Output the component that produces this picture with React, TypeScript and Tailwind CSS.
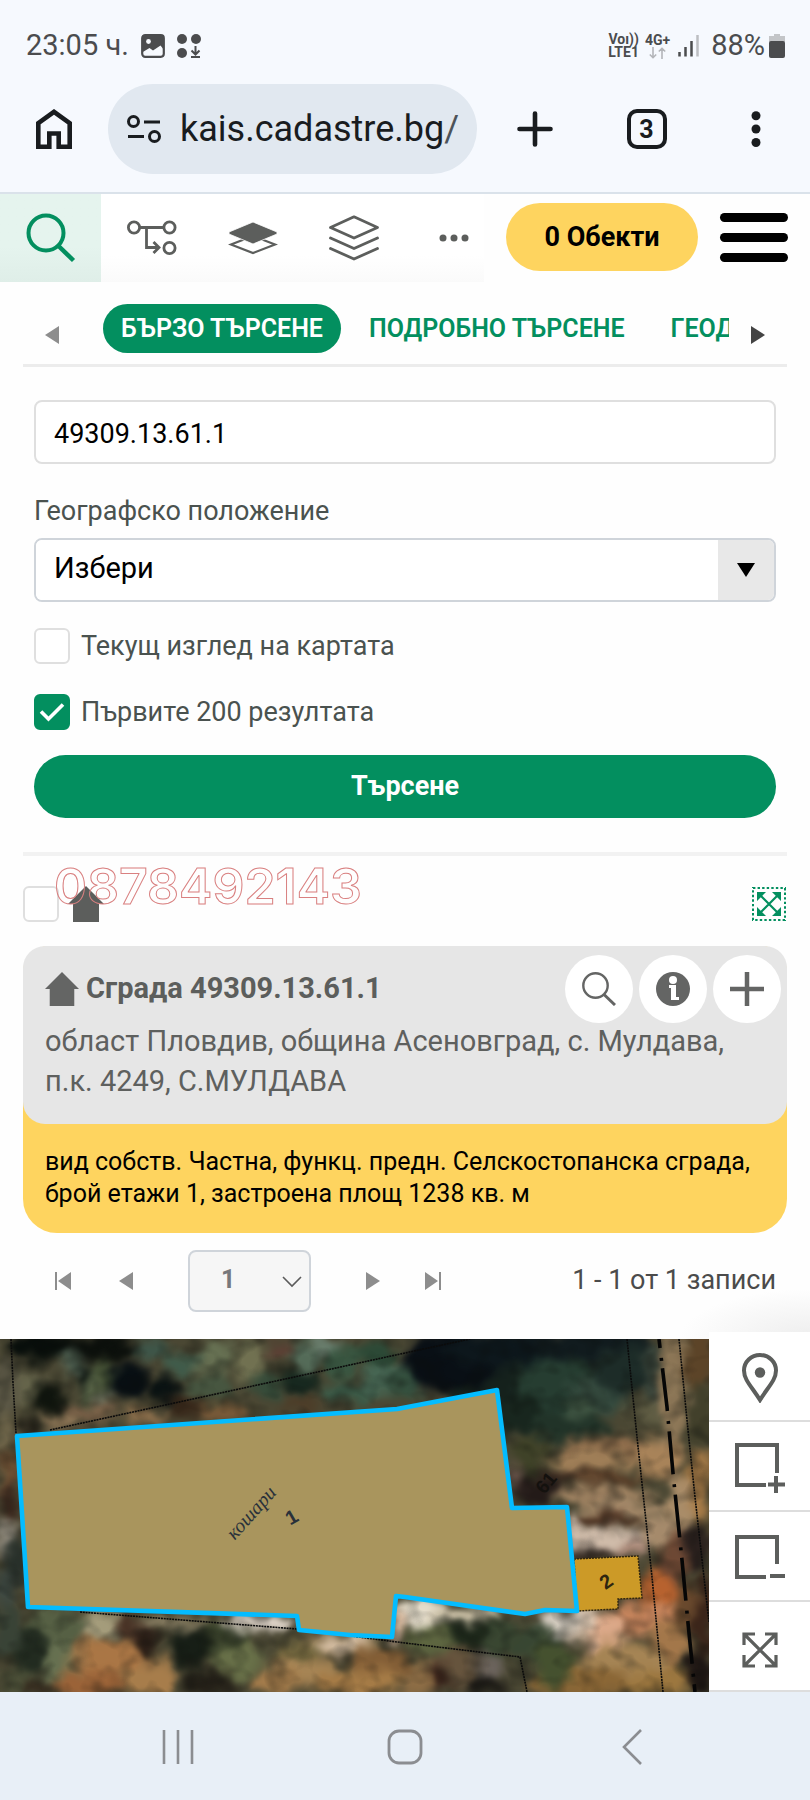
import type { ReactNode } from "react";

function Icon({ className, box, children }: { className: string; box: string; children: ReactNode }) {
  return (
    <svg className={className} viewBox={box} fill="none" stroke="currentColor" aria-hidden="true">
      {children}
    </svg>
  );
}

function StatusBar() {
  return (
    <div className="flex h-[84px] items-center justify-between pt-2 pr-[25px] pl-[26px] text-[29px] text-[#4b4c4e]">
      <div className="flex items-center">
        <span className="mr-3">23:05 ч.</span>
        <Icon className="mr-3 h-6 w-6" box="0 0 24 24">
          <rect x="1.2" y="1.2" width="21.6" height="21.6" rx="3" strokeWidth="2.2" />
          <path d="M1 3a2 2 0 0 1 2-2h18a2 2 0 0 1 2 2v13l-3.500-4.500-7.500 5-3.500-2.500L1 18.500z" fill="currentColor" stroke="none" />
          <circle cx="7.500" cy="7.500" r="2.400" fill="#f6f9fe" stroke="none" />
        </Icon>
        <Icon className="h-6 w-6" box="0 0 24 24">
          <g fill="currentColor" stroke="none">
            <circle cx="5" cy="5" r="5" />
            <circle cx="19" cy="5" r="5" />
            <circle cx="5" cy="19" r="5" />
          </g>
          <path d="M18.500 12v8M14.500 16.500l4 4 4-4M14 23h9" strokeWidth="2" />
        </Icon>
      </div>
      <div className="flex items-center">
        <div className="mr-1.5 flex flex-col items-center text-[14px] leading-[13px] font-bold">
          <span>Voı))</span>
          <span>LTE1</span>
        </div>
        <div className="mr-2 flex flex-col items-center text-[14px] leading-[13px] font-bold">
          <span>4G+</span>
          <Icon className="h-3 w-[17px] text-[#b3b5b9]" box="0 0 17 12">
            <path d="M4 0v10.500M.8 7.500L4 10.700 7.200 7.500M13 12V1.500M9.800 4.500L13 1.300l3.200 3.200" strokeWidth="1.600" />
          </Icon>
        </div>
        <Icon className="mr-3 h-6 w-[21px]" box="0 0 21 24">
          <path d="M1.500 18v4.500M7.500 13v9.500M13.500 7v15.500" strokeWidth="2.500" />
          <path d="M19.500 1v21.500" strokeWidth="2.500" stroke="#bcbec2" />
        </Icon>
        <span className="mr-1">88%</span>
        <Icon className="h-6 w-4" box="0 0 16 24">
          <path d="M5 0h6v2h5v6H0V2h5z" fill="#c3c5c8" stroke="none" />
          <rect y="7" width="16" height="17" rx="2" fill="currentColor" stroke="none" />
        </Icon>
      </div>
    </div>
  );
}

function BrowserBar() {
  return (
    <div className="flex h-[110px] items-start border-b-2 border-[#dae2ea] pr-[38px] pl-[31px] text-[#191c1f]">
      <button aria-label="Начало" className="mr-[31px] flex h-[90px] w-[46px] shrink-0 items-center justify-center">
        <Icon className="h-10 w-9" box="0 0 36 40">
          <path d="M2.300 37.700V14.200L18 2.800l15.700 11.400v23.500h-11V24.500h-9.400v13.200z" strokeWidth="4.600" />
        </Icon>
      </button>
      <div className="flex h-[90px] w-[369px] shrink-0 items-center rounded-full bg-[#e1e8f0] pl-[19px]">
        <Icon className="mr-[19px] h-7 w-[34px] shrink-0" box="0 0 34 28">
          <circle cx="6.500" cy="6.500" r="5" strokeWidth="3" />
          <circle cx="27.500" cy="21.500" r="5" strokeWidth="3" />
          <path d="M17 7h16M1 21.500h16" strokeWidth="3.200" />
        </Icon>
        <span className="text-[36px] whitespace-nowrap">
          kais.cadastre.bg<span className="text-[#4d5359]">/</span>
        </span>
      </div>
      <div className="flex h-[90px] flex-1 items-center justify-between pl-10">
        <button aria-label="Нов раздел">
          <Icon className="h-9 w-9" box="0 0 36 36">
            <path d="M18 2.500v31M2.500 18h31" strokeWidth="4.600" strokeLinecap="round" />
          </Icon>
        </button>
        <button aria-label="Раздели" className="flex h-10 w-10 items-center justify-center rounded-[10px] border-4 border-[#191c1f] text-[25px] leading-none font-bold">
          3
        </button>
        <button aria-label="Меню" className="flex h-10 w-8 items-center justify-center">
          <Icon className="h-9 w-3" box="0 0 12 36">
            <g fill="currentColor" stroke="none">
              <circle cx="6" cy="4.700" r="4.500" />
              <circle cx="6" cy="18" r="4.500" />
              <circle cx="6" cy="31.500" r="4.500" />
            </g>
          </Icon>
        </button>
      </div>
    </div>
  );
}

function Toolbar() {
  const tool = "flex w-[101px] items-center justify-center";
  return (
    <div className="flex h-[88px] items-stretch text-[#5c5e5c]">
      <div className="flex bg-linear-to-b from-white from-70% to-[#fafafa]">
        <button aria-label="Търсене" className="flex w-[101px] items-center justify-center bg-linear-to-b from-[#e5f4ee] from-60% to-[#dfeee8] text-[#038f5f]">
          <Icon className="h-[50px] w-[50px]" box="0 0 50 50">
            <circle cx="20" cy="20" r="17.500" strokeWidth="4" />
            <path d="M31.500 32l16 15.500" strokeWidth="4.500" />
          </Icon>
        </button>
        <button aria-label="Връзки" className={tool}>
          <Icon className="h-9 w-[50px]" box="0 0 50 36">
            <g strokeWidth="2.800">
              <circle cx="7" cy="7.500" r="5.600" />
              <circle cx="42.500" cy="7.500" r="5.600" />
              <circle cx="42.500" cy="28" r="5.600" />
              <path d="M13 7.500h24M19.500 7.500v20H30M26.500 22l5.500 5.500-5.500 5.500" />
            </g>
          </Icon>
        </button>
        <button aria-label="Основен слой" className={tool}>
          <Icon className="h-[34px] w-[50px]" box="0 0 50 34">
            <path d="M3 23.500l22-8.500 22 8.500-22 8.500z" strokeWidth="2.200" />
            <path d="M1 11L25 1l24 10v2L25 23 1 13z" fill="currentColor" stroke="white" strokeWidth=".8" />
          </Icon>
        </button>
        <button aria-label="Слоеве" className={tool}>
          <Icon className="h-[46px] w-[50px]" box="0 0 50 46">
            <g strokeWidth="2.800" strokeLinecap="round" strokeLinejoin="round">
              <path d="M1.500 12.500L25 1.800l23.500 10.700L25 23z" />
              <path d="M1.500 23L25 33.500 48.500 23M1.500 33.500L25 44l23.500-10.500" />
            </g>
          </Icon>
        </button>
        <button aria-label="Още" className="flex w-20 items-center justify-center pl-5">
          <Icon className="h-2 w-[30px]" box="0 0 30 8">
            <g fill="currentColor" stroke="none">
              <circle cx="4" cy="4" r="3.500" />
              <circle cx="15" cy="4" r="3.500" />
              <circle cx="26" cy="4" r="3.500" />
            </g>
          </Icon>
        </button>
      </div>
      <div className="flex flex-1 items-start justify-end gap-[22px] pt-[9px] pr-[22px]">
        <button className="h-[68px] w-48 rounded-full bg-[#fed45f] text-[27px] font-bold text-black">0 Обекти</button>
        <button aria-label="Навигация" className="flex h-[68px] w-[68px] flex-col items-center justify-center gap-[11px]">
          <span className="h-[9px] w-full rounded-full bg-black" />
          <span className="h-[9px] w-full rounded-full bg-black" />
          <span className="h-[9px] w-full rounded-full bg-black" />
        </button>
      </div>
    </div>
  );
}

function Triangle({ dir }: { dir: "left" | "right" }) {
  return (
    <Icon className="h-[18px] w-[14px]" box="0 0 14 18">
      <path d={dir === "left" ? "M14 0v18L0 9z" : "M0 0v18l14-9z"} fill="currentColor" stroke="none" />
    </Icon>
  );
}

function Tabs() {
  return (
    <div className="mx-[23px] flex items-start border-b-[3px] border-[#ececec] pt-[22px] pb-[11px]">
      <button aria-label="Назад" className="flex h-[49px] w-20 shrink-0 items-center pt-3 pl-[22px] text-[#8d8d8d]">
        <Triangle dir="left" />
      </button>
      <nav className="flex min-w-0 flex-1 overflow-hidden text-[25px] font-semibold text-[#038f5f]">
        <a href="#quick" className="flex h-[49px] shrink-0 items-center rounded-full bg-[#038f5f] px-[18px] text-white">БЪРЗО ТЪРСЕНЕ</a>
        <a href="#detailed" className="ml-2.5 flex h-[49px] shrink-0 items-center px-[18px]">ПОДРОБНО ТЪРСЕНЕ</a>
        <a href="#geodetic" className="ml-2.5 flex h-[49px] shrink-0 items-center pl-[18px]">ГЕОД</a>
      </nav>
      <button aria-label="Напред" className="flex h-[49px] w-[58px] shrink-0 items-center pt-3 pl-[22px] text-[#444]">
        <Triangle dir="right" />
      </button>
    </div>
  );
}

function Check({ id, label, checked, className }: { id: string; label: string; checked?: boolean; className: string }) {
  return (
    <div className={className}>
      <span className="relative h-9 w-9 shrink-0">
        <input id={id} type="checkbox" defaultChecked={checked} className="peer block h-9 w-9 appearance-none rounded-md border-2 border-[#dfdfdf] bg-white checked:border-[#038f5f] checked:bg-[#038f5f]" />
        <svg className="pointer-events-none absolute inset-0 hidden h-9 w-9 peer-checked:block" viewBox="0 0 36 36" fill="none" stroke="white" strokeWidth="3.600" aria-hidden="true">
          <path d="M7 17.500l7.500 7.500L29 10.500" />
        </svg>
      </span>
      <label htmlFor={id} className="leading-8">{label}</label>
    </div>
  );
}

function SearchForm() {
  return (
    <form className="flex flex-col px-[34px] pt-[33px] text-[27px] text-[#4a524f]" onSubmit={(e) => e.preventDefault()}>
      <input aria-label="Идентификатор" defaultValue="49309.13.61.1" className="h-16 w-full rounded-lg border-2 border-[#dfdfdf] bg-white px-[18px] pt-1 text-black" />
      <label htmlFor="place" className="mt-[31px] mb-[11px] leading-8">Географско положение</label>
      <div className="flex h-16 overflow-hidden rounded-lg border-2 border-[#cfd4da]">
        <select id="place" className="min-w-0 flex-1 appearance-none bg-white pb-0.5 pl-[18px] text-[29px] text-black">
          <option>Избери</option>
        </select>
        <span className="flex w-14 items-center justify-center bg-[#e8e8e8] text-black">
          <Icon className="h-[14px] w-[18px]" box="0 0 18 14">
            <path d="M0 0h18L9 14z" fill="currentColor" stroke="none" />
          </Icon>
        </span>
      </div>
      <Check id="view" label="Текущ изглед на картата" className="mt-[26px] flex items-center gap-[11px]" />
      <Check id="first" label="Първите 200 резултата" checked className="mt-[30px] flex items-center gap-[11px]" />
      <button className="mt-[25px] h-[63px] rounded-full bg-[#038f5f] text-[27px] font-bold text-white">Търсене</button>
    </form>
  );
}

function House({ className }: { className: string }) {
  return (
    <Icon className={className} box="0 0 36 36">
      <path d="M18 0l18 18h-5v18H5V18H0z" fill="currentColor" stroke="none" />
    </Icon>
  );
}

function ResultHeader() {
  return (
    <div className="relative mt-[34px] flex items-center border-t-4 border-[#f2f2f2] pt-[30px] text-[#5c5e5c]">
      <input aria-label="Избери всички" type="checkbox" className="h-9 w-9 appearance-none rounded-md border-2 border-[#dfdfdf] bg-white" />
      <House className="ml-[9px] h-9 w-9" />
      <span className="absolute top-1.5 left-[31px] font-[Inter] text-[50px] leading-[48px] font-semibold text-transparent [-webkit-text-stroke:1px_#d98080]">0878492143</span>
      <button aria-label="Покажи всички" className="ml-auto text-[#038f5f]">
        <Icon className="h-9 w-9" box="0 0 36 36">
          <rect x="2" y="2" width="32" height="32" strokeWidth="2" strokeDasharray="2.400 2.170" />
          <path d="M9 9l18 18M27 9L9 27" strokeWidth="2.200" />
          <path d="M6 6h9l-9 9zM30 6v9l-9-9zM6 30v-9l9 9zM30 30h-9l9-9z" fill="currentColor" stroke="none" />
        </Icon>
      </button>
    </div>
  );
}

function ResultCard() {
  const round = "flex h-[68px] w-[68px] items-center justify-center rounded-full bg-white";
  return (
    <article className="mt-6 rounded-t-[26px] rounded-b-[34px] bg-[#fed45f]">
      <div className="rounded-[22px] bg-[#e6e6e6] pt-[9px] pb-[23px] text-[29px] text-[#5e605e]">
        <div className="flex items-center pr-1.5 pl-[22px] text-[#646564]">
          <House className="mr-[7px] h-[34px] w-[34px]" />
          <h2 className="flex-1 font-bold text-[#5c5e5c]">Сграда 49309.13.61.1</h2>
          <div className="flex gap-1.5">
            <button aria-label="Търсене" className={round}>
              <Icon className="h-[34px] w-[34px]" box="0 0 34 34">
                <circle cx="13.500" cy="13.500" r="12.200" strokeWidth="2.400" />
                <path d="M22 22.500L33 33" strokeWidth="3" />
              </Icon>
            </button>
            <button aria-label="Информация" className={round}>
              <Icon className="h-[34px] w-[34px]" box="0 0 34 34">
                <circle cx="17" cy="17" r="17" fill="currentColor" stroke="none" />
                <circle cx="17" cy="8" r="4" fill="white" stroke="none" />
                <path d="M13 13h7v12h3v3h-8V16h-2z" fill="white" stroke="none" />
              </Icon>
            </button>
            <button aria-label="Добави" className={round}>
              <Icon className="h-[34px] w-[34px]" box="0 0 34 34">
                <path d="M17 0v34M0 17h34" strokeWidth="4.500" />
              </Icon>
            </button>
          </div>
        </div>
        <p className="-mt-0.5 px-[22px] leading-10">област Пловдив, община Асеновград, с. Мулдава, п.к. 4249, С.МУЛДАВА</p>
      </div>
      <p className="px-[22px] pt-[22px] pb-[23px] text-[25px] leading-8 text-black">
        вид собств. Частна, функц. предн. Селскостопанска сграда, брой етажи 1, застроена площ 1238 кв. м
      </p>
    </article>
  );
}

function Pager() {
  return (
    <div className="flex items-center bg-[radial-gradient(ellipse_130px_50px_at_100%_100%,#ededed,transparent)] pt-[17px] pr-[34px] pb-[27px] pl-[55px] text-[#8d8d8d]">
      <button aria-label="Първа страница">
        <Icon className="h-[18px] w-4" box="0 0 16 18">
          <path d="M0 0h2v18H0zM16 0v18L3 9z" fill="currentColor" stroke="none" />
        </Icon>
      </button>
      <button aria-label="Предишна страница" className="ml-12"><Triangle dir="left" /></button>
      <div className="relative ml-[55px] h-[62px] w-[123px]">
        <select aria-label="Страница" className="h-full w-full appearance-none rounded-lg border-2 border-[#cfd4da] bg-[#f6f6f6] pr-2 pb-0.5 pl-[31px] text-[25px] font-bold text-[#77787b]">
          <option>1</option>
        </select>
        <Icon className="pointer-events-none absolute top-[26px] right-[9px] h-3 w-5 text-[#5b5b5b]" box="0 0 20 12">
          <path d="M1 1l9 9 9-9" strokeWidth="1.600" />
        </Icon>
      </div>
      <button aria-label="Следваща страница" className="ml-[55px]"><Triangle dir="right" /></button>
      <button aria-label="Последна страница" className="ml-[45px]">
        <Icon className="h-[18px] w-4" box="0 0 16 18">
          <path d="M14 0h2v18h-2zM0 0v18l13-9z" fill="currentColor" stroke="none" />
        </Icon>
      </button>
      <span className="ml-auto pb-0.5 text-[27px] text-[#4b4b4b]">1 - 1 от 1 записи</span>
    </div>
  );
}

/* Ground patches: centre x, centre y, radius x, radius y, colour. */
const ground: [number, number, number, number, string][] = [
  [5, 50, 14, 30, "#5b5745"],
  [45, 8, 35, 14, "#080e0b"],
  [100, 8, 40, 14, "#0c100c"],
  [30, 48, 14, 18, "#65644a"],
  [72, 25, 12, 14, "#586b5a"],
  [105, 38, 18, 16, "#4d5b3b"],
  [90, 48, 9, 22, "#596447"],
  [50, 60, 16, 17, "#10150e"],
  [85, 38, 7, 11, "#101813"],
  [105, 61, 8, 8, "#8d9278"],
  [128, 42, 20, 20, "#080f13"],
  [90, 72, 30, 8, "#796047"],
  [60, 84, 20, 5, "#a68763"],
  [25, 88, 12, 7, "#1e1b14"],
  [145, 78, 20, 8, "#8c6e4b"],
  [150, 10, 14, 12, "#3e5548"],
  [180, 24, 20, 12, "#405b4a"],
  [215, 18, 18, 17, "#667052"],
  [210, 50, 25, 14, "#475640"],
  [165, 52, 16, 14, "#0a1212"],
  [185, 70, 20, 10, "#38281a"],
  [225, 75, 24, 8, "#7b5a38"],
  [250, 20, 16, 24, "#717151"],
  [280, 9, 14, 9, "#5b4034"],
  [265, 48, 16, 14, "#364b39"],
  [305, 16, 14, 17, "#546b58"],
  [300, 45, 18, 14, "#17281f"],
  [325, 6, 16, 8, "#6b8070"],
  [340, 24, 18, 17, "#395641"],
  [350, 54, 30, 10, "#3b5a47"],
  [300, 68, 24, 5, "#4e3a25"],
  [385, 40, 24, 17, "#466552"],
  [375, 14, 22, 12, "#2c4936"],
  [405, 45, 18, 12, "#35513f"],
  [510, 50, 60, 45, "#15211c"],
  [450, 22, 48, 32, "#090f15"],
  [510, 10, 65, 18, "#0d171c"],
  [590, 6, 60, 18, "#111b1e"],
  [560, 50, 48, 32, "#263d31"],
  [520, 75, 24, 20, "#18261e"],
  [600, 55, 28, 20, "#354a3e"],
  [625, 30, 32, 24, "#1d2c28"],
  [570, 88, 38, 17, "#213328"],
  [530, 116, 18, 20, "#3f4228"],
  [580, 72, 15, 10, "#3d5240"],
  [648, 72, 22, 12, "#5f5c43"],
  [655, 35, 12, 30, "#39443a"],
  [672, 60, 12, 85, "#8d7757"],
  [698, 20, 15, 40, "#5c4428"],
  [700, 75, 12, 34, "#42402b"],
  [610, 110, 52, 13, "#8c6b4a"],
  [590, 122, 42, 12, "#9f7e57"],
  [660, 120, 24, 20, "#a88359"],
  [565, 137, 24, 5, "#473023"],
  [608, 139, 38, 4, "#5d3822"],
  [600, 155, 52, 9, "#a18362"],
  [535, 150, 24, 14, "#231a18"],
  [515, 136, 9, 12, "#6d574d"],
  [630, 170, 52, 6, "#ad8f6e"],
  [602, 181, 40, 5, "#4a2b1c"],
  [658, 192, 30, 14, "#a58a6b"],
  [605, 201, 40, 12, "#d0bcaa"],
  [576, 195, 10, 20, "#ccb9a7"],
  [593, 216, 29, 5, "#2d1f1a"],
  [635, 211, 16, 8, "#aa8979"],
  [700, 150, 12, 36, "#a77b47"],
  [680, 165, 12, 30, "#a98c68"],
  [695, 210, 15, 24, "#2b211e"],
  [674, 224, 12, 30, "#6d4834"],
  [660, 250, 18, 24, "#b7622f"],
  [640, 280, 36, 16, "#c4835b"],
  [600, 292, 26, 18, "#dba888"],
  [580, 286, 20, 16, "#d5c0ab"],
  [685, 268, 12, 24, "#69492d"],
  [704, 280, 9, 45, "#3a2419"],
  [670, 305, 20, 24, "#a3774a"],
  [620, 322, 44, 20, "#a58454"],
  [580, 344, 54, 16, "#8b6736"],
  [660, 343, 30, 15, "#9c773f"],
  [700, 335, 13, 24, "#1f1714"],
  [535, 304, 30, 18, "#384632"],
  [558, 283, 22, 12, "#d4ccc0"],
  [555, 327, 20, 24, "#45512f"],
  [500, 299, 22, 20, "#394631"],
  [465, 298, 24, 20, "#1d271a"],
  [430, 302, 24, 14, "#5d6540"],
  [425, 274, 26, 15, "#e5ddcb"],
  [465, 276, 35, 8, "#c9bea4"],
  [455, 327, 26, 18, "#66543d"],
  [490, 327, 14, 12, "#6b635c"],
  [440, 338, 14, 12, "#3c241b"],
  [416, 340, 17, 20, "#8d6d45"],
  [485, 347, 22, 10, "#1c1a16"],
  [397, 285, 8, 20, "#d2b49a"],
  [340, 306, 42, 11, "#a68a62"],
  [345, 305, 26, 8, "#d4bda2"],
  [380, 325, 28, 15, "#835e36"],
  [300, 330, 35, 14, "#a68454"],
  [355, 343, 45, 14, "#a57b46"],
  [300, 312, 26, 10, "#71653d"],
  [220, 302, 30, 18, "#3b442c"],
  [260, 283, 38, 8, "#e6dbd0"],
  [190, 305, 20, 24, "#171e16"],
  [240, 320, 24, 18, "#687048"],
  [275, 345, 25, 12, "#a47c4b"],
  [210, 343, 25, 16, "#242018"],
  [170, 284, 42, 6, "#8c8165"],
  [100, 285, 24, 15, "#a49c7b"],
  [130, 287, 12, 14, "#493326"],
  [145, 307, 14, 18, "#2e2018"],
  [55, 288, 28, 20, "#566044"],
  [30, 310, 20, 24, "#222b20"],
  [60, 325, 18, 24, "#667050"],
  [20, 345, 20, 14, "#4c5038"],
  [40, 350, 20, 8, "#342b1e"],
  [90, 320, 20, 22, "#9e7548"],
  [115, 325, 30, 24, "#aa7645"],
  [90, 346, 34, 14, "#9b6338"],
  [150, 340, 26, 18, "#a77d4b"],
  [8, 95, 10, 20, "#6d6449"],
  [8, 135, 10, 24, "#7d5a3a"],
  [10, 165, 10, 20, "#3b291e"],
  [5, 198, 8, 20, "#8e887b"],
  [17, 225, 12, 24, "#28302a"],
  [5, 250, 12, 20, "#3f4942"],
  [8, 290, 15, 24, "#394336"],
];

function MapView() {
  return (
    <svg className="block h-[353px] min-w-0 flex-1 bg-[#3d3f2e]" viewBox="0 0 709 353" preserveAspectRatio="xMidYMid slice" role="img" aria-label="Карта">
      <defs>
        <filter id="soft" x="-5%" y="-5%" width="110%" height="110%" colorInterpolationFilters="sRGB">
          <feGaussianBlur in="SourceGraphic" stdDeviation="4.500" result="b" />
          <feTurbulence type="fractalNoise" baseFrequency=".04" numOctaves="2" seed="8" result="n" />
          <feDisplacementMap in="b" in2="n" scale="22" xChannelSelector="R" yChannelSelector="G" />
          <feGaussianBlur stdDeviation="1.500" />
        </filter>
        <filter id="grain" x="0" y="0" width="100%" height="100%" colorInterpolationFilters="sRGB">
          <feTurbulence type="fractalNoise" baseFrequency=".045 .055" numOctaves="2" seed="3" />
          <feColorMatrix values="0 0 0 0 .04  0 0 0 0 .05  0 0 0 0 .04  1.800 0 0 0 -.8" />
        </filter>
      </defs>
      <g filter="url(#soft)">
        <rect x="-20" y="-20" width="750" height="393" fill="#4a4733" />
        {ground.map(([cx, cy, rx, ry, fill], i) => (
          <ellipse key={i} cx={cx} cy={cy} rx={rx} ry={ry} fill={fill} />
        ))}
      </g>
      <rect width="709" height="353" filter="url(#grain)" opacity=".5" />
      <g fill="none" stroke="#0b0b0b" strokeWidth="1.600" strokeDasharray="2 .8">
        <path d="M11 0l2 44 3 50M50 91L405 14l65-14M80 273l217 17 108 14 115 14 7 35" />
        <path d="M627 0l10 98 15 140 11 115M679 0l9 91 7 67 14 125" />
      </g>
      <path d="M659 0l8 68 6 66 9 87 6 63 7 69" fill="none" stroke="#060606" strokeWidth="3.600" strokeDasharray="43 10 3 7.500" strokeDashoffset="34" />
      <path d="M574 220l64-3 4 42-24 1v10l-41 2z" fill="#cc9a27" stroke="#33270e" strokeWidth="1.500" strokeDasharray="2 1" />
      <path d="M17 97L397 70l100-19 15 118 55-1 10 104-32-1-20 4-120-17-9-1-4 41-42-2-51-5-2-14-269-9z" fill="#a9955d" stroke="#04bcff" strokeWidth="4.600" strokeLinejoin="round" />
      <g fill="#29313a" textAnchor="middle">
        <text transform="translate(256 178) rotate(-48)" fontFamily="Liberation Serif" fontStyle="italic" fontSize="20">кошари</text>
        <text transform="translate(295 184) rotate(-30)" fontFamily="Liberation Sans" fontWeight="700" fontSize="20">1</text>
        <text transform="translate(551 148) rotate(-50)" fontFamily="Liberation Sans" fontWeight="700" fontSize="19" fill="#14110e">61</text>
        <text transform="translate(610 248) rotate(-35)" fontFamily="Liberation Sans" fontWeight="700" fontSize="20" fill="#2e250f">2</text>
      </g>
    </svg>
  );
}

function MapTools() {
  const cell = "flex h-[90px] items-center justify-center border-b-2 border-[#dddddd] bg-white";
  return (
    <div className="-mt-[7px] flex w-[101px] flex-col text-[#5c5e5c]">
      <button aria-label="Местоположение" className={cell}>
        <Icon className="mt-1 h-[50px] w-[38px]" box="0 0 38 50">
          <path d="M19 47C11 34 3 27 3 17.500a16 15.500 0 0 1 32 0C35 27 27 34 19 47z" strokeWidth="4" />
          <circle cx="19" cy="19.500" r="5.200" fill="currentColor" stroke="none" />
        </Icon>
      </button>
      <button aria-label="Увеличи" className={cell}>
        <Icon className="mt-1 h-[50px] w-[50px]" box="0 0 50 50">
          <path d="M31 42H2V2h40v28M41 33v17M33 41.500h17" strokeWidth="4" />
        </Icon>
      </button>
      <button aria-label="Намали" className={cell}>
        <Icon className="mt-1 h-[50px] w-[50px]" box="0 0 50 50">
          <path d="M31 44H2V4h40v27M35 43h15" strokeWidth="4" />
        </Icon>
      </button>
      <button aria-label="Цял екран" className={cell}>
        <Icon className="mt-2 h-9 w-9" box="0 0 36 36">
          <path d="M2 13V2h11M23 2h11v11M34 23v11H23M13 34H2V23M2 2l32 32M34 2L2 34" strokeWidth="3.200" />
        </Icon>
      </button>
    </div>
  );
}

function NavBar() {
  return (
    <div className="flex h-[108px] items-center justify-between bg-[#e8eff7] pt-0.5 pr-[168px] pl-[162px] text-[#8b8d91]">
      <button aria-label="Последни">
        <Icon className="h-9 w-8" box="0 0 32 36">
          <path d="M2 1v34M16 1v34M30 1v34" strokeWidth="2.600" />
        </Icon>
      </button>
      <button aria-label="Начален екран" className="pr-1.5">
        <Icon className="h-9 w-9" box="0 0 36 36">
          <rect x="2" y="2" width="32" height="32" rx="10" strokeWidth="2.800" />
        </Icon>
      </button>
      <button aria-label="Назад">
        <Icon className="h-9 w-5" box="0 0 20 36">
          <path d="M19 1L2 18l17 17" strokeWidth="2.600" />
        </Icon>
      </button>
    </div>
  );
}

export default function App() {
  return (
    <div className="min-h-screen bg-[#fefefe] font-[Roboto,sans-serif]">
      <header className="bg-[#f6f9fe]">
        <StatusBar />
        <BrowserBar />
      </header>
      <main>
        <Toolbar />
        <Tabs />
        <SearchForm />
        <section className="px-[23px]">
          <ResultHeader />
          <ResultCard />
        </section>
        <Pager />
        <div className="flex items-start">
          <MapView />
          <MapTools />
        </div>
      </main>
      <NavBar />
    </div>
  );
}
